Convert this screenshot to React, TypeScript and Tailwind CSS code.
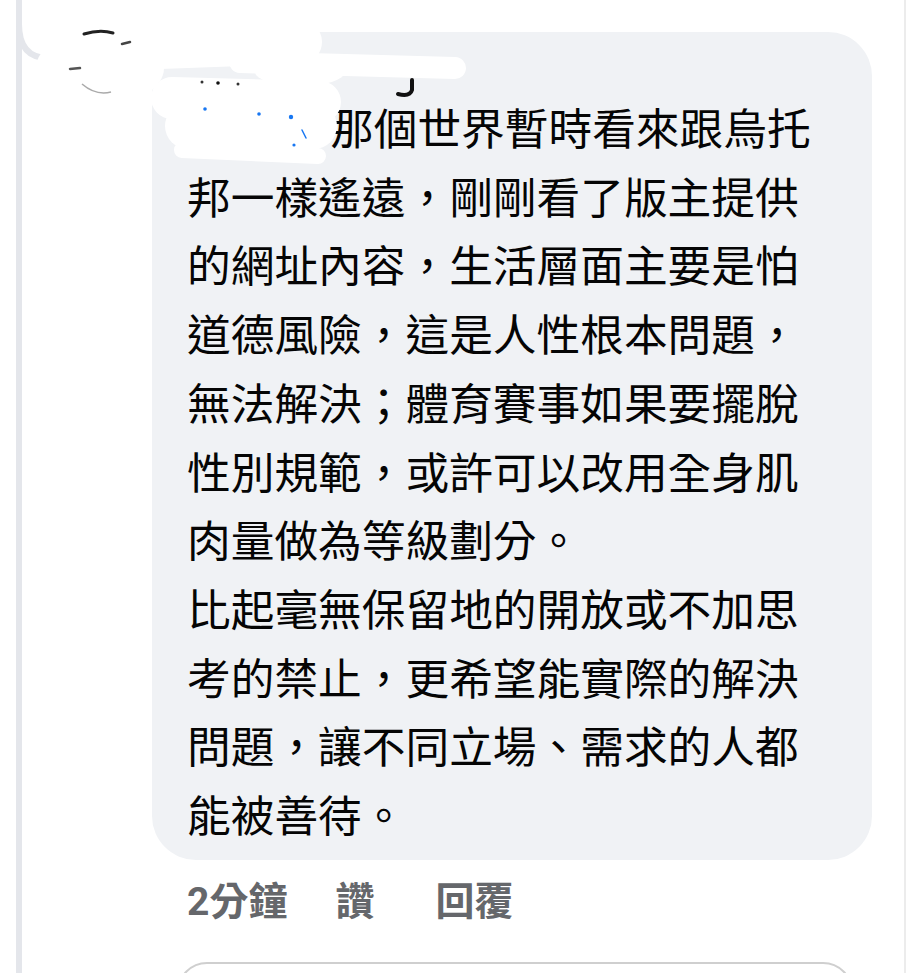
const lines = [
  "那個世界暫時看來跟烏托",
  "邦一樣遙遠，剛剛看了版主提供",
  "的網址內容，生活層面主要是怕",
  "道德風險，這是人性根本問題，",
  "無法解決；體育賽事如果要擺脫",
  "性別規範，或許可以改用全身肌",
  "肉量做為等級劃分。",
  "比起毫無保留地的開放或不加思",
  "考的禁止，更希望能實際的解決",
  "問題，讓不同立場、需求的人都",
  "能被善待。",
];

function Scribble() {
  // hand-drawn white-out over the commenter's avatar and name
  return (
    <svg
      className="absolute left-0 top-0 h-[170px] w-[480px]"
      viewBox="0 0 480 170"
      aria-hidden="true"
    >
      <path d="M19 24 Q19 58 48 58 L70 58" stroke="#e4e6eb" strokeWidth="6" fill="none" />
      <g stroke="#ffffff" strokeLinecap="round" fill="none">
        <path d="M78 50 L300 42" strokeWidth="44" />
        <path d="M240 62 L455 68" strokeWidth="22" />
        <path d="M172 98 L320 102" strokeWidth="42" />
        <path d="M188 126 L314 126" strokeWidth="46" />
        <path d="M182 150 L318 156" strokeWidth="16" />
      </g>
      <ellipse cx="100" cy="68" rx="64" ry="38" fill="#ffffff" />
      <ellipse cx="300" cy="72" rx="45" ry="14" fill="#ffffff" />
      <path d="M84 34 Q100 29 113 33" stroke="#222" strokeWidth="3" fill="none" strokeLinecap="round" />
      <path d="M122 44 L130 42" stroke="#444" strokeWidth="2.5" strokeLinecap="round" />
      <path d="M70 69 L80 68" stroke="#555" strokeWidth="2.5" strokeLinecap="round" />
      <path d="M82 84 Q96 96 111 92" stroke="#aaa" strokeWidth="1.5" fill="none" />
      <path d="M412 80 L412 90 Q410 97 398 94" stroke="#111" strokeWidth="4" fill="none" strokeLinecap="round" />
      <circle cx="202" cy="82" r="1.5" fill="#333" />
      <circle cx="218" cy="83" r="1.8" fill="#111" />
      <circle cx="238" cy="84" r="1.5" fill="#333" />
      <circle cx="205" cy="109" r="1.8" fill="#1877f2" />
      <circle cx="259" cy="114" r="1.8" fill="#1877f2" />
      <circle cx="291" cy="117" r="2.2" fill="#1877f2" />
      <circle cx="294" cy="145" r="1.6" fill="#1877f2" />
      <path d="M302 130 L306 138" stroke="#1877f2" strokeWidth="1.5" strokeLinecap="round" />
    </svg>
  );
}

export default function App() {
  return (
    <div
      className="relative flex h-[973px] w-[906px] overflow-hidden bg-white"
      style={{ fontFamily: '"Noto Sans CJK TC", "Noto Sans", sans-serif' }}
    >
      {/* thread line */}
      <div className="ml-[16px] w-[6px] shrink-0 bg-[#e4e6eb]" />

      <div className="ml-[130px] flex w-[720px] flex-col">
        {/* comment bubble */}
        <div className="mt-[32px] rounded-[44px] bg-[#f0f2f5] pl-[35px] pb-[12px] pt-[24px] text-[43.7px] leading-[68.7px] text-[#050505]">
          <div className="h-[36px]" />
          {lines.map((line, i) => (
            <div key={i} className="whitespace-nowrap">
              {i === 0 && <span className="inline-block w-[143px]" />}
              {line}
            </div>
          ))}
        </div>

        {/* actions */}
        <div
          className="mt-[21px] flex h-[44px] items-center pl-[35px] text-[39px] font-bold text-[#65676b]"
          style={{ fontFamily: 'Roboto, "Noto Sans CJK TC", sans-serif' }}
        >
          <span>2分鐘</span>
          <span className="ml-[48px]">讚</span>
          <span className="ml-[61px]">回覆</span>
        </div>

        {/* reply input */}
        <div className="ml-[25px] mt-[37px] h-[60px] w-[676px] shrink-0 rounded-[30px] border-2 border-[#cfcfcf]" />
      </div>

      <div className="ml-auto w-[2px] shrink-0 bg-[#ececec]" />

      <Scribble />
    </div>
  );
}
